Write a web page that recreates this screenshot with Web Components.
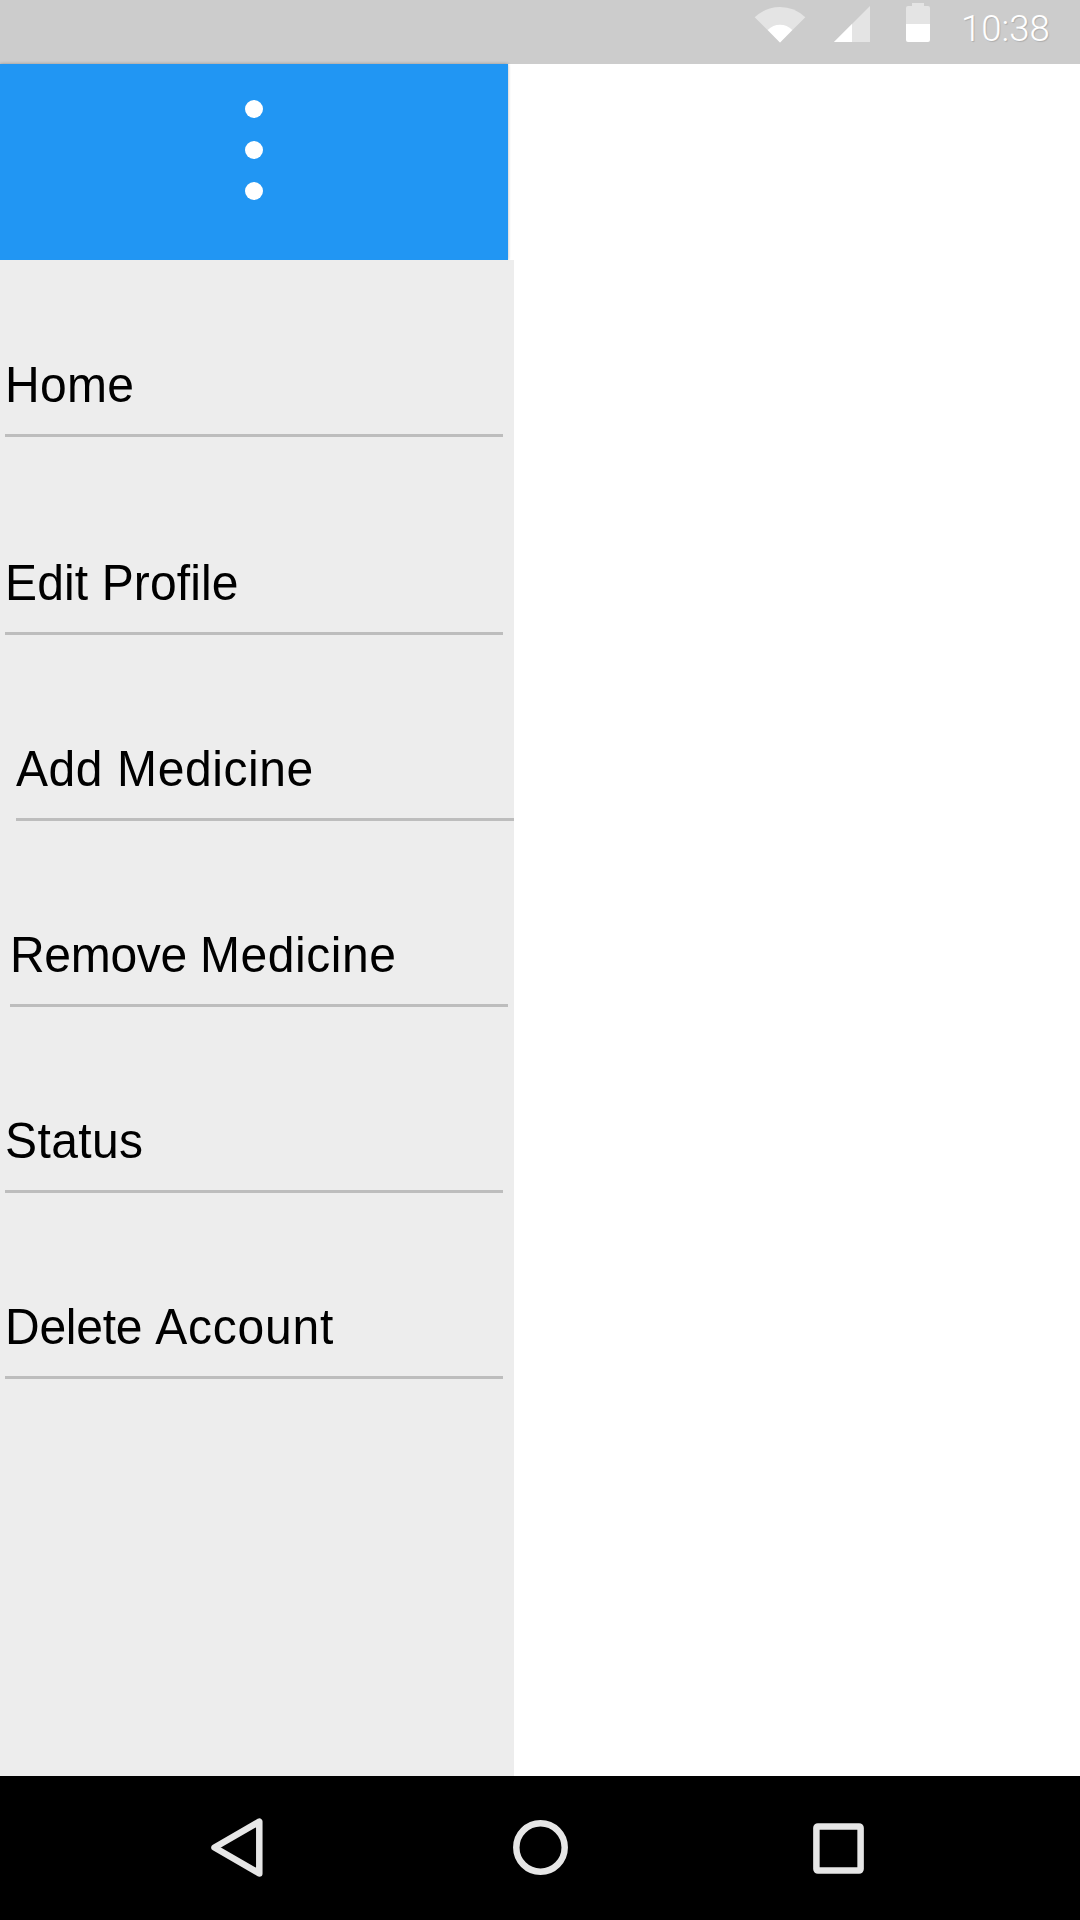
<!DOCTYPE html>
<html lang="en">
<head>
<meta charset="utf-8">
<title>Menu</title>
<style>
html,body{margin:0;background:#fff}
body{font-family:"Liberation Sans",Arial,sans-serif}
</style>
</head>
<body>
<app-screen>
  <status-bar slot="status">10:38</status-bar>
  <side-drawer>
    <menu-header slot="header"></menu-header>
    <menu-item style="margin-top:95px;letter-spacing:.3px">Home</menu-item>
    <menu-item style="margin-top:116px;letter-spacing:.12px">Edit Profile</menu-item>
    <menu-item style="margin-top:104px;margin-left:16px;letter-spacing:.58px">Add Medicine</menu-item>
    <menu-item style="margin-top:104px;margin-left:10px;letter-spacing:.55px"><span style="letter-spacing:-.3px">Remove </span>Medicine</menu-item>
    <menu-item style="margin-top:104px;letter-spacing:.4px">Status</menu-item>
    <menu-item style="margin-top:104px;letter-spacing:.75px"><span style="letter-spacing:-.25px">Delete </span>Account</menu-item>
  </side-drawer>
  <nav-bar slot="nav"></nav-bar>
</app-screen>
<script>
const element = (name, html) => {
  const template = document.createElement('template');
  template.innerHTML = html;
  customElements.define(name, class extends HTMLElement {
    constructor() {
      super();
      this.attachShadow({mode: 'open'}).append(template.content.cloneNode(true));
    }
  });
};

element('app-screen', `
<style>
:host{display:flex;flex-direction:column;width:1080px;height:1920px;overflow:hidden;background:#fff}
main{flex:1;display:flex;min-height:0}
</style>
<slot name="status"></slot><main><slot></slot></main><slot name="nav"></slot>`);

element('status-bar', `
<style>
:host{display:flex;justify-content:flex-end;align-items:flex-start;box-sizing:border-box;height:64px;flex:none;padding-right:30px;background:#ccc;color:#fff}
svg{display:block;flex:none;margin-right:31px}
.time{font:300 36.5px/58px Roboto,sans-serif;width:89px;white-space:nowrap;text-shadow:1px 1px 1px rgba(0,0,0,.15)}
</style>
<svg width="176" height="48" viewBox="754 0 176 48" fill="#fff">
  <path d="M780 42.5L754.7 17.3Q765.5 7 780 7T805.3 17.3Z" fill="#e4e4e4"/>
  <path d="M780 42.5L767.7 30Q773 24.7 780 24.7T792.3 30Z"/>
  <path d="M834 42L870 6V42Z" fill="#e4e4e4"/><path d="M834 42L852 24V42Z"/>
  <path d="M906 24V8Q906 6 908 6H912V3H924V6H928Q930 6 930 8V24Z" fill="#e4e4e4"/>
  <path d="M906 24H930V40Q930 42 928 42H908Q906 42 906 40Z"/>
</svg>
<span class="time"><slot></slot></span>`);

element('side-drawer', `
<style>
:host{display:flex;flex-direction:column;width:514px}
nav{flex:1;display:flex;flex-direction:column;background:#ededed}
</style>
<slot name="header"></slot><nav><slot></slot></nav>`);

element('menu-header', `
<style>
:host{display:flex;flex-direction:column;align-items:center;gap:23px;box-sizing:border-box;width:508px;height:196px;padding-top:36px;background:#2196f3;box-shadow:0 0 3px rgba(0,0,0,.3)}
i{width:18px;height:18px;border-radius:50%;background:#fff}
</style>
<i></i><i></i><i></i>`);

element('menu-item', `
<style>
:host{display:block;box-sizing:border-box;width:498px;height:82px;flex:none;margin-left:5px;border-bottom:3px solid #bdbdbd;color:#000;font-size:48px;line-height:62px;white-space:nowrap}
.label{display:block;transform:scaleY(1.06);transform-origin:0 48px}
</style>
<span class="label"><slot></slot></span>`);

element('nav-bar', `
<style>
:host{display:block;height:144px;flex:none;background:#000}
svg{display:block}
</style>
<svg width="1080" height="144" viewBox="0 1776 1080 144" fill="none" stroke="#e6e6e6" stroke-width="6.5" stroke-linejoin="round">
  <path d="M214.5 1847.5L259.3 1821.6V1873.4Z"/>
  <circle cx="540.5" cy="1847.5" r="24.2"/>
  <rect x="816.4" y="1826.4" width="44.2" height="44.2" rx="1.5"/>
</svg>`);
</script>
</body>
</html>
